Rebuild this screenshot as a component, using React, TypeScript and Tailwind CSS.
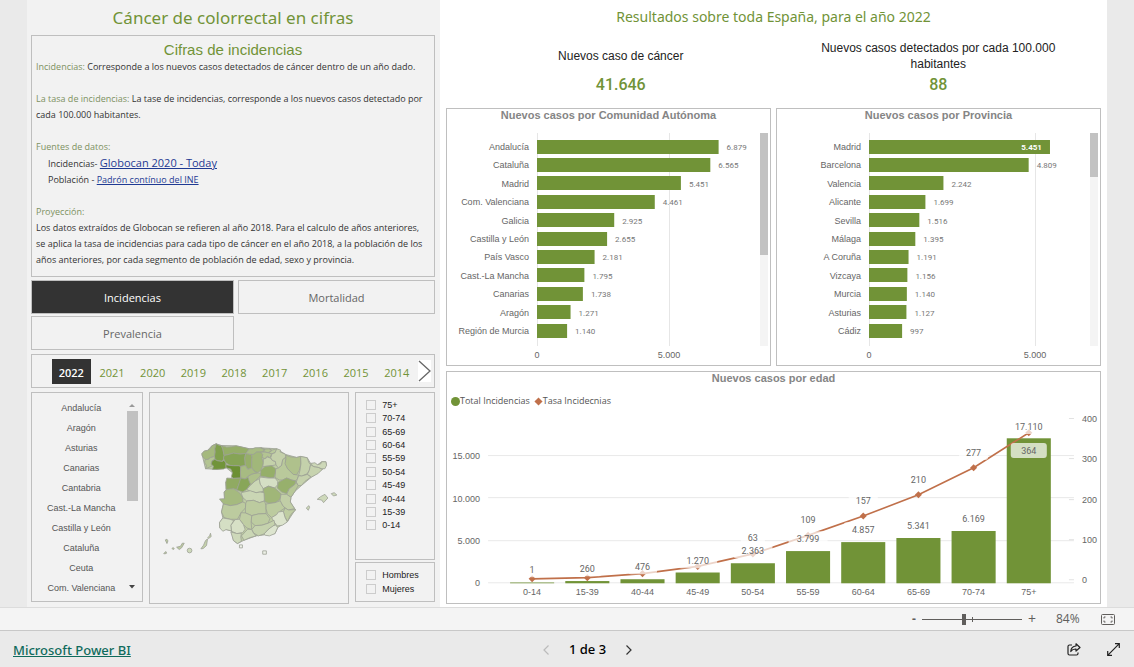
import React from "react";

const GREEN = "#719337";
const ARIAL = "font-['Liberation_Sans',sans-serif]";
const DIN = "font-['Roboto',sans-serif]";

type Datum = { name: string; value: number };

const format = (n: number) => String(n).replace(/(\d)(\d{3})$/, "$1.$2");

const communities: Datum[] = [
  { name: "Andalucía", value: 6879 },
  { name: "Cataluña", value: 6565 },
  { name: "Madrid", value: 5451 },
  { name: "Com. Valenciana", value: 4461 },
  { name: "Galicia", value: 2925 },
  { name: "Castilla y León", value: 2655 },
  { name: "País Vasco", value: 2181 },
  { name: "Cast.-La Mancha", value: 1795 },
  { name: "Canarias", value: 1738 },
  { name: "Aragón", value: 1271 },
  { name: "Región de Murcia", value: 1140 },
];

const provinces: Datum[] = [
  { name: "Madrid", value: 5451 },
  { name: "Barcelona", value: 4809 },
  { name: "Valencia", value: 2242 },
  { name: "Alicante", value: 1699 },
  { name: "Sevilla", value: 1516 },
  { name: "Málaga", value: 1395 },
  { name: "A Coruña", value: 1191 },
  { name: "Vizcaya", value: 1156 },
  { name: "Murcia", value: 1140 },
  { name: "Asturias", value: 1127 },
  { name: "Cádiz", value: 997 },
];

function BarChart({
  title,
  data,
  origin,
  span,
  thumb,
  inside,
}: {
  title: string;
  data: Datum[];
  origin: number;
  span: number;
  thumb: number;
  inside?: string;
}) {
  return (
    <section className="border border-[#bfbfbf] bg-white">
      <h3 className={`${ARIAL} h-4 text-center text-[11px] leading-3 font-bold text-[#858585]`}>{title}</h3>
      <svg viewBox="0 0 323 240" className="block w-full" role="img" aria-label={title}>
        {[0, 5000].map((t) => {
          const x = origin + (t / 5000) * span;
          return (
            <g key={t}>
              <rect x={x} y={8} width={1} height={213} fill="#e6e6e6" />
              <text x={x} y={233} textAnchor="middle" fill="#666" className={`${ARIAL} text-[9px]`}>
                {format(t)}
              </text>
            </g>
          );
        })}
        {data.map((d, i) => {
          const mid = 21.5 + i * 18.4;
          const w = (d.value / 5000) * span;
          const isInside = inside === d.name;
          return (
            <g key={d.name}>
              <text x={origin - 8} y={mid + 3.5} textAnchor="end" fill="#666" className={`${ARIAL} text-[9px]`}>
                {d.name}
              </text>
              <rect x={origin} y={Math.round(mid - 7)} width={w} height={14} fill={GREEN} />
              <text
                x={isInside ? origin + w - 8 : origin + w + 8}
                y={mid + 3.5}
                textAnchor={isInside ? "end" : "start"}
                fill={isInside ? "#fff" : "#777"}
                fontWeight={isInside ? 700 : 400}
                className={`${DIN} text-[8px]`}
              >
                {format(d.value)}
              </text>
            </g>
          );
        })}
        <rect x={313} y={8} width={8} height={213} fill="#f4f4f4" />
        <rect x={313} y={8} width={8} height={thumb} fill="#c2c2c2" />
      </svg>
    </section>
  );
}

type AgeDatum = { age: string; cases: number; rate: number; labels: [string, number][] };

const ages: AgeDatum[] = [
  { age: "0-14", cases: 90, rate: 1, labels: [["1", 161]] },
  { age: "15-39", cases: 260, rate: 4, labels: [["260", 160]] },
  { age: "40-44", cases: 476, rate: 14, labels: [["476", 158]] },
  { age: "45-49", cases: 1270, rate: 32, labels: [["1.270", 152]] },
  { age: "50-54", cases: 2363, rate: 63, labels: [["63", 129], ["2.363", 142]] },
  { age: "55-59", cases: 3799, rate: 109, labels: [["109", 111], ["3.799", 130]] },
  { age: "60-64", cases: 4857, rate: 157, labels: [["157", 92], ["4.857", 121]] },
  { age: "65-69", cases: 5341, rate: 210, labels: [["210", 71], ["5.341", 117]] },
  { age: "70-74", cases: 6169, rate: 277, labels: [["277", 44], ["6.169", 110]] },
  { age: "75+", cases: 17110, rate: 364, labels: [["17.110", 18], ["364", 42]] },
];

function AgeChart() {
  const cx = (i: number) => 85 + i * 55.1;
  const casesY = (v: number) => 174 - (v / 5000) * 42.3;
  const rateY = (v: number) => 170 - (v / 100) * 40.2;
  return (
    <section className="border border-[#bfbfbf] bg-white">
      <h3 className={`${ARIAL} h-[14px] text-center text-[11px] leading-3 font-bold text-[#858585]`}>
        Nuevos casos por edad
      </h3>
      <div className="flex h-[23px] items-end gap-1 pl-1 font-['Open_Sans',sans-serif] text-[9px] leading-4 text-[#555]">
        <span className="flex items-center">
          <span className="size-[9px] rounded-full bg-[#719337]" />
          Total Incidencias
        </span>
        <span className="flex items-center">
          <svg viewBox="0 0 10 10" className="size-[9px]">
            <path d="M5 0.5 9.5 5 5 9.5 0.5 5Z" fill="#c0704a" />
          </svg>
          Tasa Incidecnias
        </span>
      </div>
      <svg viewBox="0 0 652 194" className="block w-full" role="img" aria-label="Nuevos casos por edad">
        {[0, 5000, 10000, 15000].map((t) => (
          <g key={t}>
            <rect x={41} y={Math.round(casesY(t)) - 1} width={585} height={1} fill="#e9e9e9" />
            <text x={33} y={casesY(t) + 3} textAnchor="end" fill="#666" className={`${ARIAL} text-[9px]`}>
              {t > 9999 ? `${t / 1000}.000` : format(t)}
            </text>
          </g>
        ))}
        {[0, 100, 200, 300, 400].map((t) => (
          <g key={t}>
            <rect x={621} y={Math.round(rateY(t))} width={5} height={1} fill="#e2e2e2" />
            <text x={634} y={rateY(t) + 4} fill="#666" className={`${ARIAL} text-[9px]`}>
              {t}
            </text>
          </g>
        ))}
        {ages.map((d, i) => (
          <g key={d.age}>
            <rect x={cx(i) - 22} y={casesY(d.cases)} width={44} height={174 - casesY(d.cases)} fill={GREEN} />
            <text x={cx(i)} y={186} textAnchor="middle" fill="#666" className={`${ARIAL} text-[9px]`}>
              {d.age}
            </text>
          </g>
        ))}
        <polyline
          points={ages.map((d, i) => `${cx(i)},${rateY(d.rate)}`).join(" ")}
          fill="none"
          stroke="#c0704a"
          strokeWidth={1.6}
        />
        {ages.map((d, i) => (
          <path
            key={d.age}
            d="M0-3.5 3.5 0 0 3.5-3.5 0Z"
            transform={`translate(${cx(i)} ${rateY(d.rate)})`}
            fill="#c0704a"
          />
        ))}
        {ages.map((d, i) =>
          d.labels.map(([t, y]) => {
            const w = t === "364" ? 36 : t.length * 5 + 14;
            return (
              <g key={t}>
                <rect x={cx(i) - w / 2} y={y - 8} width={w} height={15} rx={3} fill="#fff" fillOpacity={0.7} />
                <text x={cx(i)} y={y + 3} textAnchor="middle" fill="#666" className={`${DIN} text-[9px]`}>
                  {t}
                </text>
              </g>
            );
          })
        )}
      </svg>
    </section>
  );
}

const mainland =
  "545,205 552,197 562,195 575,181 588,175 603,180 648,181 688,190 722,187 770,190 797,207 830,216 842,213 862,217 872,234 893,238 905,229 918,229 920,240 907,252 875,275 845,300 825,318 813,336 811,350 826,373 803,408 773,427 765,445 708,452 672,465 652,475 640,466 634,437 618,433 599,428 598,412 608,398 604,380 613,340 612,320 618,313 617,290 637,275 637,262 618,247 590,252 556,250";

const shapes: [string, string][] = [
  ["#a5b97e", "545,205 552,197 562,195 570,190 575,181 588,175 584,190 585,200 583,213 570,217 564,222 555,222 546,212"],
  ["#80a04d", "588,175 596,179 603,180 608,190 612,210 610,222 606,228 592,226 584,222 583,212 585,200 584,190"],
  ["#b3c492", "555,222 564,222 570,217 583,213 584,222 576,226 573,236 577,241 562,248 556,250 559,240 553,232"],
  ["#71943a", "576,226 584,222 592,226 606,228 612,224 617,232 618,247 610,251 590,252 577,252 580,242 573,236"],
  ["#95ae68", "603,180 620,185 634,184 648,181 662,184 688,190 682,198 677,204 660,206 640,203 622,208 612,210 608,190"],
  ["#86a456", "612,210 622,208 640,203 660,206 677,204 674,218 675,230 676,240 662,243 655,241 640,241 630,240 617,232 612,224 610,218"],
  ["#6c9034", "617,238 630,240 640,241 655,241 662,243 661,262 662,278 640,279 634,273 637,262 632,251 618,247"],
  ["#96ae6a", "677,204 693,207 696,215 695,225 695,247 688,250 683,252 676,240 674,218"],
  ["#a8bc84", "688,190 698,190 705,187 722,187 735,193 728,198 722,200 710,200 700,207 693,207 677,204 682,198"],
  ["#a1b77a", "700,207 710,200 722,200 728,207 726,220 730,232 728,243 722,255 712,262 703,258 695,247 695,225 696,215 693,207"],
  ["#b0c28f", "722,187 735,191 748,190 755,196 745,202 735,200 728,198 735,193"],
  ["#b9c99b", "748,190 756,194 770,190 768,198 765,202 755,205 745,202 755,196"],
  ["#b3c492", "728,207 722,200 735,200 745,202 755,205 750,217 742,212 735,220 726,216"],
  ["#c4d1aa", "730,220 735,220 742,215 752,218 757,225 766,228 768,238 755,241 735,243 728,243 730,232"],
  ["#c4d0aa", "770,190 782,194 780,199 797,207 798,215 788,223 785,240 775,248 768,238 766,228 757,225 752,217 756,205 765,202"],
  ["#b9c99b", "788,223 798,215 797,235 803,250 820,267 830,268 836,270 832,282 826,286 815,284 800,278 788,284 778,284 765,276 767,250 775,248 785,240"],
  ["#afc18c", "797,209 810,214 830,216 842,213 843,235 838,255 830,268 820,267 803,250 795,235 798,220"],
  ["#c4d1ab", "842,213 852,215 862,217 866,230 872,238 868,255 862,265 845,272 836,270 840,255 843,235"],
  ["#cdd8b8", "872,234 885,232 893,238 903,235 905,229 918,229 920,240 915,250 905,250 895,246 882,244"],
  ["#c7d3af", "872,238 882,244 895,246 907,252 895,264 875,275 862,267 868,255"],
  ["#c5d1ac", "836,271 845,272 862,267 873,275 855,288 845,300 835,301 829,290 832,282"],
  ["#95af69", "722,255 735,243 755,241 767,250 766,262 762,276 750,278 735,274 720,272 722,262"],
  ["#aec08b", "683,273 695,266 712,262 722,264 720,273 705,287 693,298 685,286"],
  ["#a7bb82", "662,243 676,240 683,252 695,247 703,258 712,262 695,266 683,273 675,281 662,278 661,262"],
  ["#90aa62", "620,278 640,279 662,278 660,290 655,300 650,313 640,310 630,315 618,313 617,290"],
  ["#88a658", "662,278 675,281 683,276 691,297 680,312 668,320 650,314 655,300"],
  ["#cbd7b5", "691,318 680,312 693,298 705,287 718,280 721,297 729,305 730,318 720,320 708,322"],
  ["#d5dfc4", "720,275 745,278 765,278 773,288 773,298 764,308 745,302 730,310 721,297 718,283"],
  ["#97b06c", "775,291 788,284 800,278 815,284 828,287 824,298 808,310 800,325 785,320 772,308"],
  ["#b7c797", "808,310 824,298 829,292 835,301 825,318 813,336 800,327"],
  ["#a0b678", "730,318 730,310 745,303 764,308 783,325 780,342 765,352 745,354 733,347"],
  ["#cad6b4", "663,322 690,316 708,322 720,320 732,322 733,347 718,352 700,345 680,347 668,337"],
  ["#a5ba7f", "598,341 613,340 612,320 620,312 640,310 658,322 668,337 668,350 650,358 630,361 610,356"],
  ["#bccb9f", "610,356 630,361 650,358 668,350 677,354 676,368 663,382 652,402 630,402 612,397 604,380"],
  ["#bccb9f", "677,354 680,347 700,345 718,352 733,347 738,360 738,385 715,386 695,391 676,383 676,368"],
  ["#bccb9f", "738,356 765,352 782,346 788,360 795,368 783,376 770,388 755,397 742,385 738,370"],
  ["#c1cea6", "783,327 800,327 813,336 811,350 824,370 805,374 795,368 788,360 780,345"],
  ["#bfcda2", "795,368 805,374 828,373 812,388 803,408 795,396 790,380"],
  ["#dce4cd", "755,397 770,388 775,380 790,378 795,396 802,410 787,420 772,422 762,410"],
  ["#dde5cf", "732,446 745,432 758,421 767,419 773,427 765,445 748,452 736,450"],
  ["#bdcca1", "695,391 715,386 738,385 750,400 744,414 725,420 705,421 693,410"],
  ["#c5d2ad", "695,433 705,421 725,420 744,414 762,405 765,418 745,432 732,446 715,452 700,443"],
  ["#bfcda3", "663,382 676,383 695,391 693,410 695,433 680,428 670,418 658,402"],
  ["#cbd7b5", "664,452 675,440 683,432 695,433 700,443 708,452 690,457 672,465"],
  ["#d7e0c6", "632,420 645,403 658,402 670,418 675,432 668,442 650,445 634,438"],
  ["#d5dfc4", "598,412 608,398 630,402 641,406 632,420 634,437 618,433 608,438 599,428"],
  ["#ced9ba", "632,440 650,445 664,444 662,455 664,468 652,475 640,466"],
  ["#ced9ba", "892,342 902,334 915,327 924,338 911,352 905,344"],
  ["#ced9ba", "934,325 943,322 951,329 941,332"],
  ["#ced9ba", "859,368 867,361 869,366 865,375"],
  ["#c4d1ab", "542,491 550,480 556,466 562,461 559,481 549,490"],
  ["#c4d1ab", "563,457 568,452 571,444 573,454 565,460"],
  ["#bccb9f", "469,486 481,483 486,474 492,474 484,488 477,493"],
  ["#bccb9f", "435,464 440,462 443,467 440,475"],
  ["#bccb9f", "455,490 459,487 462,491 458,493"],
  ["#bccb9f", "430,505 437,499 439,504 434,506"],
];

function SpainMap() {
  return (
    <svg viewBox="389 23 597 630" className="h-full w-full" role="img" aria-label="Mapa de España por provincia">
      <g stroke="#9da196" strokeWidth={2.4} strokeLinejoin="round">
        <polygon points={mainland} fill="#bdcca1" />
        {shapes.map(([fill, points]) => (
          <polygon key={points} points={points} fill={fill} />
        ))}
        <circle cx={508} cy={496} r={7} fill="#ced9ba" />
        <rect x={658} y={479} width={9} height={9} fill="#eef1e8" />
        <rect x={728} y={497} width={11} height={10} fill="#eef1e8" />
      </g>
    </svg>
  );
}

const regions = ["Andalucía", "Aragón", "Asturias", "Canarias", "Cantabria", "Cast.-La Mancha", "Castilla y León", "Cataluña", "Ceuta", "Com. Valenciana"];
const ageGroups = ["75+", "70-74", "65-69", "60-64", "55-59", "50-54", "45-49", "40-44", "15-39", "0-14"];
const years = ["2022", "2021", "2020", "2019", "2018", "2017", "2016", "2015", "2014"];

function Check({ label }: { label: string }) {
  return (
    <label className={`${ARIAL} flex flex-1 items-center gap-[6px] text-[9px] leading-3 text-[#222]`}>
      <input type="checkbox" className="size-[10px] appearance-none border border-[#cccccc] checked:bg-[#333]" />
      {label}
    </label>
  );
}

function Term({ children }: { children: React.ReactNode }) {
  return <span className="font-normal text-[#7d9161]">{children}</span>;
}

function LeftPanel() {
  const tab = "h-[34px] border border-[#bfbfbf] pt-[2px] font-['Open_Sans',sans-serif] text-[11px]";
  return (
    <div className="bg-[#f2f2f2] pr-[5px] pl-1">
      <h1 className="h-[35px] text-center font-['Noto_Sans',sans-serif] text-[17px] leading-[35px] text-[#719337]">
        Cáncer de colorrectal en cifras
      </h1>
      <section className="h-[242px] border border-[#bfbfbf] px-1 pt-1 font-['Open_Sans',sans-serif] text-[9px] leading-4 text-[#333]">
        <h2 className={`${ARIAL} h-[19px] text-center text-[15px] leading-[19px] font-normal text-[#719337]`}>
          Cifras de incidencias
        </h2>
        <p>
          <Term>Incidencias:</Term> Corresponde a los nuevos casos detectados de cáncer dentro de un año dado.
        </p>
        <p className="mt-4">
          <Term>La tasa de incidencias:</Term> La tase de incidencias, corresponde a los nuevos casos detectado por
          <br />
          cada 100.000 habitantes.
        </p>
        <p className="mt-4">
          <Term>Fuentes de datos:</Term>
        </p>
        <p className="pl-3">
          Incidencias-{" "}
          <a href="#globocan" className="text-[11px] text-[#1f3a93] underline">
            Globocan 2020 - Today
          </a>
        </p>
        <p className="pl-3">
          Población -{" "}
          <a href="#ine" className="text-[#1f3a93] underline">
            Padrón contínuo del INE
          </a>
        </p>
        <p className="mt-4">
          <Term>Proyección:</Term>
        </p>
        <p>
          Los datos extraídos de Globocan se refieren al año 2018. Para el calculo de años anteriores,
          <br />
          se aplica la tasa de incidencias para cada tipo de cáncer en el año 2018, a la población de los
          <br />
          años anteriores, por cada segmento de población de edad, sexo y provincia.
        </p>
      </section>
      <div className="mt-[3px] grid grid-cols-[203fr_197fr] gap-x-1 gap-y-[2px]">
        <button className={`${tab} bg-[#333] text-white`}>Incidencias</button>
        <button className={`${tab} text-[#666]`}>Mortalidad</button>
        <button className={`${tab} text-[#666]`}>Prevalencia</button>
      </div>
      <div className="mt-1 flex h-[34px] items-center gap-[2px] border border-[#bfbfbf] pr-[3px] pl-5">
        <div className="flex flex-1 gap-[2px]">
          {years.map((y, i) => (
            <button
              key={y}
              className={`h-[25px] flex-1 pt-[4px] font-['Open_Sans',sans-serif] text-[11px] ${
                i === 0 ? "bg-[#333] font-semibold text-white" : "text-[#719337]"
              }`}
            >
              {y}
            </button>
          ))}
        </div>
        <button aria-label="Años anteriores" className="bg-white">
          <svg viewBox="0 0 13 22" className="h-[22px] w-[13px]" fill="none" stroke="#666" strokeWidth={1.3}>
            <path d="M1 1 12 11 1 21" />
          </svg>
        </button>
      </div>
      <div className="mt-1 grid grid-cols-[112fr_201fr_80fr] items-start gap-x-[6px]">
        <div className="flex h-[210px] border border-[#bfbfbf] pt-[5px] pr-1">
          <ul className={`${ARIAL} flex-1 text-center text-[9px] leading-5 text-[#555]`}>
            {regions.map((r) => (
              <li key={r}>
                <button className="whitespace-nowrap pl-1">{r}</button>
              </li>
            ))}
          </ul>
          <div className="flex w-[11px] flex-col items-center pt-[5px]">
            <svg viewBox="0 0 6 4" className="h-1 w-[6px]">
              <path d="M0 4 3 1 6 4Z" fill="#999" />
            </svg>
            <div className="mt-1 h-[90px] w-full bg-[#c1c1c1]" />
            <svg viewBox="0 0 6 4" className="mt-auto mb-3 h-1 w-[6px]">
              <path d="M0 0H6L3 3.5Z" fill="#444" />
            </svg>
          </div>
        </div>
        <div className="h-[212px] border border-[#bfbfbf]">
          <SpainMap />
        </div>
        <div className="flex flex-col gap-[2px]">
          <div role="group" aria-label="Edad" className="flex h-[168px] flex-col border border-[#bfbfbf] pt-[5px] pb-[27px] pl-[10px]">
            {ageGroups.map((a) => (
              <Check key={a} label={a} />
            ))}
          </div>
          <div role="group" aria-label="Sexo" className="flex h-10 flex-col border border-[#bfbfbf] py-[5px] pl-[10px]">
            <Check label="Hombres" />
            <Check label="Mujeres" />
          </div>
        </div>
      </div>
    </div>
  );
}

function Kpi({ label, value }: { label: string; value: string }) {
  return (
    <div className="flex flex-col items-center">
      <div className={`${ARIAL} flex h-10 items-center text-center text-[12px] leading-4 text-[#222]`}>
        <span className="max-w-[250px]">{label}</span>
      </div>
      <div className={`${DIN} text-[16px] leading-[18px] font-medium text-[#719337]`}>{value}</div>
    </div>
  );
}

function RightPanel() {
  return (
    <div className="bg-white pr-[6px] pb-[3px] pl-[6px]">
      <h2 className="h-9 text-center font-['Noto_Sans',sans-serif] text-[14px] leading-[34px] text-[#719337]">
        Resultados sobre toda España, para el año 2022
      </h2>
      <div className="grid h-[72px] grid-cols-2 pr-1 pl-4">
        <Kpi label="Nuevos caso de cáncer" value="41.646" />
        <Kpi label="Nuevos casos detectados por cada 100.000 habitantes" value="88" />
      </div>
      <div className="grid grid-cols-2 gap-[5px]">
        <BarChart title="Nuevos casos por Comunidad Autónoma" data={communities} origin={90} span={132} thumb={122} />
        <BarChart title="Nuevos casos por Provincia" data={provinces} origin={92} span={166} thumb={44} inside="Madrid" />
      </div>
      <div className="mt-[5px]">
        <AgeChart />
      </div>
    </div>
  );
}

export default function App() {
  return (
    <div className="flex min-h-screen flex-col bg-[#eaeaea]">
      <main className="grid grid-cols-[413fr_667fr] px-[27px]">
        <LeftPanel />
        <RightPanel />
      </main>
      <div className="flex h-6 items-center justify-end border-t border-b border-t-[#dcdcdc] border-b-[#c8c8c8] bg-[#f4f4f4] pr-[19px] font-['Open_Sans',sans-serif] text-[12px] text-[#605e5c]">
        <button aria-label="Alejar" className="w-4 text-center font-bold">
          -
        </button>
        <div className="relative flex items-center">
          <input
            type="range"
            aria-label="Zoom"
            defaultValue={42}
            className="h-3 w-[100px] appearance-none bg-transparent [&::-webkit-slider-runnable-track]:h-px [&::-webkit-slider-runnable-track]:bg-[#605e5c] [&::-webkit-slider-thumb]:mt-[-5px] [&::-webkit-slider-thumb]:h-[11px] [&::-webkit-slider-thumb]:w-1 [&::-webkit-slider-thumb]:appearance-none [&::-webkit-slider-thumb]:bg-[#605e5c]"
          />
          <span className="pointer-events-none absolute left-1/2 h-[5px] w-px bg-[#605e5c]" />
        </div>
        <button aria-label="Acercar" className="w-5 text-center text-[14px] leading-5">
          +
        </button>
        <span className="ml-[14px] w-[45px]">84%</span>
        <button aria-label="Ajustar a la página">
          <svg viewBox="0 0 14 11" className="h-[11px] w-[14px]" fill="none" stroke="#605e5c">
            <rect x={0.5} y={0.5} width={13} height={10} rx={1} />
            <path d="M3 4.5V3H4.5M9.5 3H11V4.5M11 6.5V8H9.5M4.5 8H3V6.5" />
          </svg>
        </button>
      </div>
      <footer className="grid flex-1 grid-cols-[1fr_auto_1fr] items-center pr-[14px] pl-[13px] font-['Noto_Sans',sans-serif] text-[13px] text-black">
        <a href="https://powerbi.microsoft.com" className="justify-self-start pt-1 font-medium text-[#0f6b5c] underline">
          Microsoft Power BI
        </a>
        <nav className="flex items-center gap-5 pt-px pl-[42px]">
          <button aria-label="Página anterior" disabled>
            <svg viewBox="0 0 6 10" className="h-[10px] w-[6px]" fill="none" stroke="#bbb" strokeWidth={1.2}>
              <path d="M5.5 0.5 1 5 5.5 9.5" />
            </svg>
          </button>
          <span className="font-medium">1 de 3</span>
          <button aria-label="Página siguiente">
            <svg viewBox="0 0 6 10" className="h-[10px] w-[6px]" fill="none" stroke="#333" strokeWidth={1.2}>
              <path d="M0.5 0.5 5 5 0.5 9.5" />
            </svg>
          </button>
        </nav>
        <div className="flex items-center gap-[26px] justify-self-end pt-px">
          <button aria-label="Compartir">
            <svg viewBox="0 0 14 13" className="h-[13px] w-[14px]" fill="none" stroke="#222" strokeWidth={1.2} strokeLinejoin="round">
              <path d="M5 2H2.5Q1 2 1 3.5V10.500Q1 12 2.500 12H9.500Q11 12 11 10.500V9.500" />
              <path d="M9 0.800 13 4.500 9 8V6Q5.500 5.800 3.800 8.500Q4 3.500 9 3Z" />
            </svg>
          </button>
          <button aria-label="Pantalla completa">
            <svg viewBox="0 0 13 13" className="size-[13px]" fill="none" stroke="#222" strokeWidth={1.2}>
              <path d="M8 0.700H12.300V5M12.300 0.700 0.700 12.300M0.700 8V12.300H5" />
            </svg>
          </button>
        </div>
      </footer>
    </div>
  );
}
